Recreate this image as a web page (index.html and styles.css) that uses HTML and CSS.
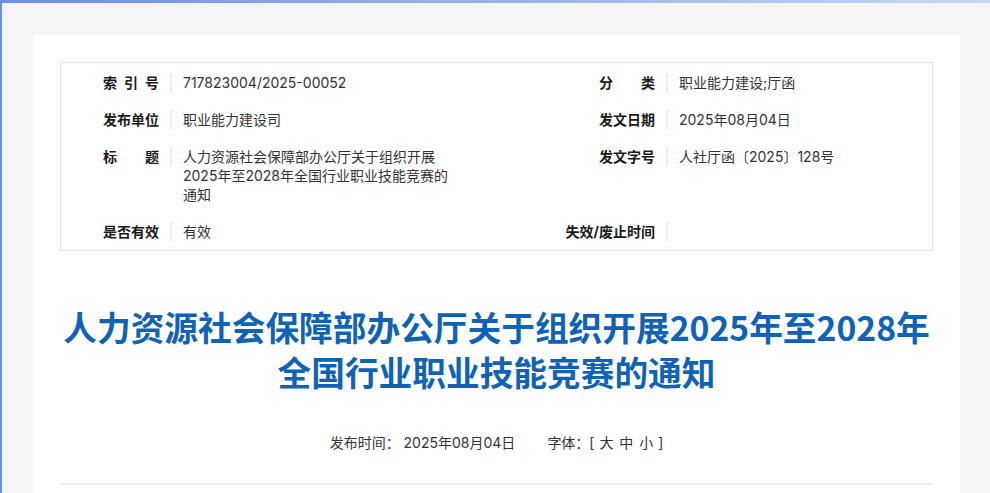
FILE: index.html
```html
<!DOCTYPE html>
<html lang="zh-CN">
<head>
    <meta charset="UTF-8">
    <meta name="viewport" content="width=device-width, initial-scale=1.0">
    <title>人力资源社会保障部办公厅关于组织开展2025年至2028年全国行业职业技能竞赛的通知</title>
    <link rel="stylesheet" href="styles.css">
</head>
<body>
    <div class="frame">
        <div class="page">
            <div class="info">
                <div class="label"><span class="just">索引号</span></div>
                <div class="sep"><i></i></div>
                <div class="value">717823004/2025-00052</div>
                <div class="label"><span class="just">分类</span></div>
                <div class="sep"><i></i></div>
                <div class="value">职业能力建设;厅函</div>

                <div class="label">发布单位</div>
                <div class="sep"><i></i></div>
                <div class="value">职业能力建设司</div>
                <div class="label">发文日期</div>
                <div class="sep"><i></i></div>
                <div class="value">2025年08月04日</div>

                <div class="label"><span class="just">标题</span></div>
                <div class="sep"><i></i></div>
                <div class="value">人力资源社会保障部办公厅关于组织开展2025年至2028年全国行业职业技能竞赛的通知</div>
                <div class="label">发文字号</div>
                <div class="sep"><i></i></div>
                <div class="value">人社厅函〔2025〕128号</div>

                <div class="label">是否有效</div>
                <div class="sep"><i></i></div>
                <div class="value">有效</div>
                <div class="label">失效/废止时间</div>
                <div class="sep"><i></i></div>
                <div class="value"></div>
            </div>

            <h1 class="title">人力资源社会保障部办公厅关于组织开展2025年至2028年<br>全国行业职业技能竞赛的通知</h1>

            <div class="meta">
                <span>发布时间：&nbsp;2025年08月04日</span><span class="fontsize">字体：[ <a href="#">大</a> <a href="#">中</a> <a href="#">小</a> ]</span>
            </div>
            <hr class="rule">
        </div>
    </div>
</body>
</html>
```

FILE: styles.css
```css
body{
    margin: 0;
    font-family: Inter, "Noto Sans CJK SC", sans-serif;
    color: #333;
    background-color: #f5f5f5;
}
.frame{
    height: 493px;
    overflow: hidden;
    box-sizing: border-box;
    padding: 32px 30px 0 31px;
    border-top: 3px solid #6b8fe3;
    border-image: linear-gradient(to right, #6b8fe3, #c6d6f6) 1;
    border-left: 2px solid transparent;
    position: relative;
}
.frame::before{
    content: "";
    position: absolute;
    left: -2px;
    top: 0;
    width: 2px;
    height: 100%;
    background: linear-gradient(to bottom, #6b8fe3 0%, #6b8fe3 34%, #fafcff 56%, #fafafa 100%);
}
.page{
    background-color: white;
    padding: 27px 27px 0 27px;
    min-height: 500px;
}
.info{
    display: grid;
    grid-template-columns: 98px 24px 314px 158px 24px 1fr;
    border: 1px solid #e4e4e4;
    padding: 1px 0 0 0;
    font-size: 14px;
    line-height: 19px;
}
.info > div{
    padding: 9px 0;
}
.label{
    text-align: right;
    font-weight: bold;
    color: #1a1a1a;
}
.just{
    display: inline-block;
    width: 56px;
    text-align: justify;
    text-align-last: justify;
}
.sep i{
    display: block;
    width: 2px;
    height: 19px;
    margin-left: 11px;
    background-color: #ececec;
}
.value{
    padding-right: 42px !important;
    color: #333;
}
.title{
    margin: 53px 0 0 0;
    text-align: center;
    font-family: "Noto Sans CJK SC", sans-serif;
    font-size: 33.7px;
    line-height: 45px;
    font-weight: bold;
    color: #1063b4;
}
.meta{
    margin-top: 39px;
    text-align: center;
    font-size: 14px;
    line-height: 20px;
    color: #333;
}
.fontsize{
    margin-left: 32px;
}
.fontsize a{
    color: #333;
    text-decoration: none;
    margin: 0 1px;
}
.rule{
    margin: 30px 0 0 0;
    border: none;
    border-top: 2px solid #eeeeee;
}
```
